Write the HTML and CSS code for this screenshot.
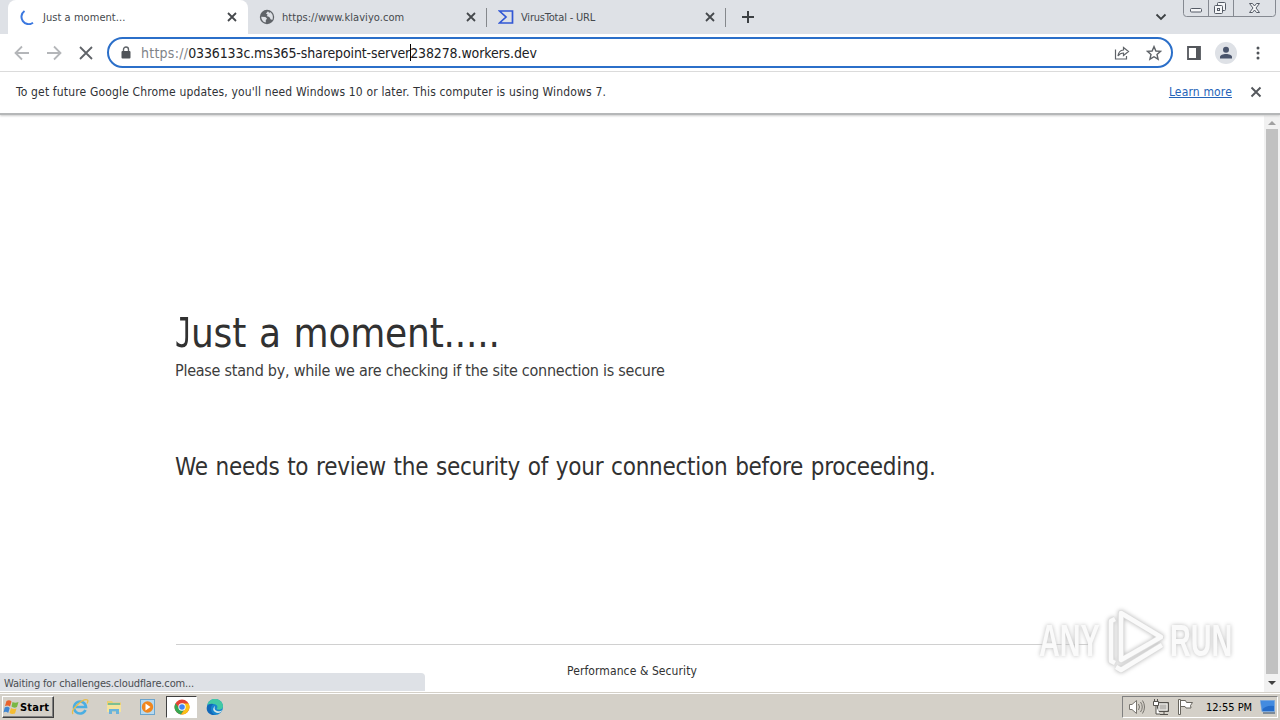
FILE: index.html
```html
<!DOCTYPE html>
<html lang="en">
<head>
<meta charset="utf-8">
<title>Just a moment...</title>
<link rel="stylesheet" href="styles.css">
</head>
<body>
<div class="screen">
  <header class="tabstrip">
    <div class="tab tab-active">
      <svg class="fav" width="16" height="16" viewBox="0 0 16 16"><path d="M4.500 2A6.800 6.800 0 0 0 13 13.800" fill="none" stroke="#3b78e0" stroke-width="2"/></svg>
      <span class="tab-title">Just a moment...</span>
      <svg class="close" width="10" height="10" viewBox="0 0 10 10"><path d="M1 1l8 8M9 1l-8 8"/></svg>
    </div>
    <div class="tab">
      <svg class="fav" width="16" height="16" viewBox="0 0 16 16"><circle cx="8" cy="8" r="7.2" fill="#5f6368"/><path d="M2.2 7.7l4.2.3 1.7 1.8-1.3 1.2v2.6C4 13 2.200 10.700 2.200 7.700zM9 2.300l-2 2.200 1.700 1.300-1 1.200 2.600 1 1.500 2.500 1.700.200c1-2.700.300-6.300-2.700-7.700l-.300 1.300z" fill="#dee1e6"/></svg>
      <span class="tab-title">https://www.klaviyo.com</span>
      <svg class="close" width="10" height="10" viewBox="0 0 10 10"><path d="M1 1l8 8M9 1l-8 8"/></svg>
    </div>
    <div class="tab tab-virus">
      <svg class="fav" width="16" height="16" viewBox="0 0 16 16"><path d="M1.500 2H14.500V14H1.500L8 8Z" fill="none" stroke="#3157d5" stroke-width="1.700"/></svg>
      <span class="tab-title">VirusTotal - URL</span>
      <svg class="close" width="10" height="10" viewBox="0 0 10 10"><path d="M1 1l8 8M9 1l-8 8"/></svg>
    </div>
    <div class="newtab"><svg width="12" height="12" viewBox="0 0 12 12"><path d="M6 0v12M0 6h12" stroke="#3c4043" stroke-width="2"/></svg></div>
    <svg class="chevron" width="12" height="8" viewBox="0 0 12 8"><path d="M1.500 1.500L6 6l4.500-4.500" fill="none" stroke="#3c4043" stroke-width="1.800"/></svg>
    <svg class="winbtns" width="93" height="17" viewBox="0 0 93 17"><path d="M.5-1V13.500q0 3 3 3H89.500q3 0 3-3V-1M25.500 0V16M50.500 0V16" fill="none" stroke="#858991"/><g fill="#f5f6f8" stroke="#555b66"><rect x="7.500" y="8.500" width="11" height="3.500" rx="1"/><rect x="34.500" y="2.500" width="8" height="8" rx="1"/><rect x="31.500" y="5.500" width="8" height="8" rx="1"/><rect x="34.500" y="8.500" width="2" height="2"/><path d="M66.500 3.500h3l2 2.500 2-2.500h3l-3.500 4.500 3.500 4.500h-3l-2-2.500-2 2.500h-3L70 8z"/></g></svg>
  </header>
  <div class="toolbar">
    <svg class="nav" width="16" height="16" viewBox="0 0 16 16"><path d="M15 8H2M8 1.500L1.500 8 8 14.500" stroke="#b4b6b9"/></svg>
    <svg class="nav" width="16" height="16" viewBox="0 0 16 16"><path d="M1 8h13M8 1.500L14.500 8 8 14.500" stroke="#b4b6b9"/></svg>
    <svg class="nav" width="16" height="16" viewBox="0 0 16 16"><path d="M2 2l12 12M14 2L2 14" stroke="#5f6368"/></svg>
    <div class="omnibox">
      <svg class="lock" width="10" height="14" viewBox="0 0 10 14"><path d="M2.500 6V3.500a2.500 2.500 0 0 1 5 0V6" fill="none" stroke="#5f6368" stroke-width="1.400"/><rect x=".5" y="5" width="9" height="7.500" rx="1" fill="#505459"/></svg>
      <div class="url"><span class="scheme">https://</span><span class="host">0336133c.ms365-sharepoint-server</span><span class="caret"></span><span class="host">238278.workers.dev</span></div>
      <svg class="share" width="16" height="16" viewBox="0 0 16 16"><path d="M1.500 4.500v9.500h11V11M9.500 2.500L14.500 6.500l-5 4V8Q6 8 4 11q.5-5.500 5.500-6z" fill="none" stroke="#5f6368" stroke-width="1.200"/></svg>
      <svg width="16" height="16" viewBox="0 0 16 16"><path d="M8 1.600l1.900 4.400 4.700.4-3.600 3.100 1.100 4.700L8 11.700l-4.100 2.500L5 9.500 1.400 6.400l4.700-.4z" fill="none" stroke="#5f6368" stroke-width="1.400"/></svg>
    </div>
    <svg class="panel" width="14" height="14" viewBox="0 0 14 14"><path d="M1 1h12v12H1z" fill="none" stroke="#54575c" stroke-width="1.800"/><path d="M9 1h4v12H9z" fill="#54575c"/></svg>
    <svg class="avatar" width="22" height="22" viewBox="0 0 22 22"><circle cx="11" cy="11" r="11" fill="#dee1e6"/><circle cx="11" cy="7.700" r="3" fill="#49546b"/><path d="M5 16.500v-1.500c0-4 12-4 12 0v1.500z" fill="#49546b"/></svg>
    <svg class="dots" width="4" height="14" viewBox="0 0 4 14"><g fill="#505459"><circle cx="2" cy="2" r="1.500"/><circle cx="2" cy="7" r="1.500"/><circle cx="2" cy="12" r="1.500"/></g></svg>
  </div>
  <div class="infobar">
    <span class="info-text">To get future Google Chrome updates, you'll need Windows 10 or later. This computer is using Windows 7.</span>
    <a class="learn">Learn more</a>
    <svg class="info-close" width="12" height="12" viewBox="0 0 12 12"><path d="M1.500 1.500l9 9M10.500 1.500l-9 9" stroke="#54575c" stroke-width="1.900"/></svg>
  </div>
  <div class="view">
    <main class="page">
      <h1><span class="cap">J</span>ust a moment.....</h1>
      <p class="standby">Please stand by, while we are checking if the site connection is secure</p>
      <h2>We needs to review the security of your connection before proceeding.</h2>
      <footer><span>Performance &amp; Security</span></footer>
    </main>
    <div class="scrollbar">
      <svg width="16" height="14" viewBox="0 0 16 14"><path d="M4 10h8L8 6z" fill="#a0a0a0"/></svg>
      <div class="thumb"></div>
      <svg width="16" height="18" viewBox="0 0 16 18"><path d="M4 7h8l-4 4z" fill="#404040"/></svg>
    </div>
    <div class="status"><span>Waiting for challenges.cloudflare.com...</span></div>
    <div class="watermark">
      <span>ANY</span>
      <svg width="60" height="66" viewBox="0 0 60 66"><g fill="none" stroke-linejoin="round"><path d="M15 5L55 29 15 52ZM9 11L5 13V53L9 55M10 59L15 62 56 37" stroke="#dedede" stroke-width="6"/><path d="M15 5L55 29 15 52ZM9 11L5 13V53L9 55M10 59L15 62 56 37" stroke="#fafafa" stroke-width="4.400"/></g></svg>
      <span>RUN</span>
    </div>
  </div>
  <div class="taskbar">
    <div class="start"><svg width="17" height="16" viewBox="0 0 16 16"><path d="M3 2q3-1.500 5 .5L6.500 7.500Q4.500 6 1.500 7z" fill="#e8622c"/><path d="M9 3q2.500 1.500 6 0l-1.500 5q-3 1.500-5.500-.5z" fill="#79b743"/><path d="M1.200 8.500q3-1.500 5 .5L4.700 14Q2.500 12 0 13.500z" fill="#3f86d2"/><path d="M7.500 9q2.500 1.500 5.500.5l-1.500 5q-3 1.200-5.500-.5z" fill="#f5bd32"/></svg><span>Start</span></div>
    <div class="quick">
      <svg width="18" height="18" viewBox="0 0 18 18"><path d="M14.500 12A6 6 0 1 1 15 9H5" fill="none" stroke="#4baee2" stroke-width="2.600"/><path d="M2 16C-1 12 12 0 16.500 2q1 .8-.5 3.500" fill="none" stroke="#e8bd48" stroke-width="1.300"/></svg>
      <svg width="18" height="18" viewBox="0 0 18 18"><path d="M2 3h5l1 1.500h8V13H2z" fill="#e9cf73"/><path d="M3 5h12v2H3z" fill="#7dbf91"/><path d="M2 7h14v7H2z" fill="#f5e39d"/><path d="M4 16v-5h10v5h-3v-2.500H7V16z" fill="#69b3dc"/></svg>
      <svg width="18" height="18" viewBox="0 0 18 18"><rect x="1.500" y="1.500" width="14" height="15" fill="#b7d9ef" stroke="#6ba5ce"/><circle cx="8.500" cy="9" r="5.700" fill="#f0861d"/><path d="M6.500 5.500L11.500 9l-5 3.500z" fill="#fff"/></svg>
      <div class="current"><svg width="16" height="16" viewBox="0 0 16 16"><circle cx="8" cy="8" r="7.500" fill="#e54335"/><path d="M1.500 4.200A7.500 7.500 0 0 0 7 15.400L10.500 10 5 9z" fill="#36a852"/><path d="M8 4.500h6.600A7.500 7.500 0 0 1 7 15.400L11 10z" fill="#fbc116"/><circle cx="8" cy="8" r="3.700" fill="#fff"/><circle cx="8" cy="8" r="2.800" fill="#4285f4"/></svg></div>
      <svg width="18" height="18" viewBox="0 0 18 18"><circle cx="9" cy="9" r="8" fill="#1786cf"/><path d="M1.500 7C3-1 16-1 17 8c.3 4-4.500 4.500-6.500 3 2-2 .5-5-3-5-2.500 0-5 .2-6 1z" fill="#42c9a4"/><path d="M7.500 6C3 9 5 16 10 17 1 18-1 10 2 7q3-2 5.500-1z" fill="#1268b8"/><path d="M9 8q-1.500 4 2 5t5-1l-1 2q-3 2-6 0T8 9z" fill="#d7e8e8"/></svg>
    </div>
    <div class="tray">
      <svg width="18" height="18" viewBox="0 0 18 18"><path d="M1.500 6.500H4L8.500 2.500v13L4 11.500H1.500z" fill="#fff" stroke="#77746e"/><path d="M10.500 6q2 3 0 6M12.500 4q3.500 5 0 10M14.500 2.500q4 6.500 0 13" fill="none" stroke="#77746e"/></svg>
      <svg width="18" height="18" viewBox="0 0 18 18"><path d="M5.500 4.500h11v9h-11z" fill="#aaa9a5" stroke="#55524d"/><path d="M7 6h8v6H7z" fill="#bbb9b5" stroke="#f3f2ee"/><path d="M8 16.500h8M12 14v2" stroke="#55524d"/><path d="M1.500 3.500h5v4h-5zM2.500 3V1M5.500 3V1M4 8v8h4" fill="#fff" stroke="#55524d"/></svg>
      <svg width="18" height="18" viewBox="0 0 18 18"><path d="M2.500 1.500h2v15h-2zM4.500 2.500h5l1 2h6l-2 3 .5 2.500h-5L9 8.500H4.500z" fill="#fff" stroke="#69665f"/></svg>
      <span class="clock">12:55 PM</span>
      <svg class="desk" width="16" height="14" viewBox="0 0 16 14"><path d="M.5.5h14v11H2z" fill="#246bc9" stroke="#7aa7dc"/><path d="M1 1h13v5Q6 5 2 10z" fill="#438be0"/><path d="M3 13h12" stroke="#28466b"/></svg>
    </div>
  </div>
</div>
</body>
</html>
```
FILE: styles.css
```css
* { box-sizing: border-box; }
body { margin: 0; overflow: hidden; font-family: "DejaVu Sans Condensed", "DejaVu Sans", sans-serif; font-stretch: condensed; color: #303236; }
svg { display: block; flex: none; }
span, a, p, h1, h2 { white-space: nowrap; }
.screen { width: 1280px; height: 720px; display: flex; flex-direction: column; background: #fff; }
.tabstrip { height: 34px; flex: none; display: flex; background: #dee1e6; }
.tab { width: 239px; height: 34px; display: flex; align-items: center; padding: 0 11px; font-size: 11px; color: #45494d; }
.tab-active { width: 240px; margin-left: 8px; background: #fff; border-radius: 8px 8px 0 0; padding-left: 12px; }
.tab + .tab { background: linear-gradient(#85888c, #85888c) right 8px / 1px 19px no-repeat; }
.tab-title { margin-left: 7px; flex: 1; letter-spacing: .05px; }
.tab-virus .tab-title { letter-spacing: -.2px; }
.close path { stroke: #45484c; stroke-width: 1.8; fill: none; }
.newtab { width: 44px; display: flex; align-items: center; justify-content: center; }
.chevron { margin: 13px 16px 0 auto; }
.winbtns { margin-right: 4px; }
.toolbar { height: 38px; flex: none; display: flex; align-items: center; padding: 0 18px 0 14px; border-bottom: 1px solid #dcdcdc; }
.nav { margin-right: 16px; }
.nav path { fill: none; stroke-width: 1.8; }
.omnibox { width: 1066px; height: 31px; margin-left: -3px; flex: none; display: flex; align-items: center; border: 2px solid #2b6fc9; border-radius: 16px; padding: 0 9px 0 12px; }
.url { flex: 1; display: flex; align-items: center; margin-left: 10px; font-size: 14px; color: #202124; }
.scheme { color: #808388; letter-spacing: .25px; }
.host { letter-spacing: -.12px; }
.caret { width: 1px; height: 17px; background: #000; margin-right: -1px; }
.share { margin-right: 16px; }
.panel { margin-left: 14px; }
.avatar { margin-left: 14px; }
.dots { margin-left: auto; margin-right: 2px; }
.infobar { height: 43px; flex: none; display: flex; align-items: center; padding: 0 18px 1px 16px; font-size: 12px; letter-spacing: .16px; border-bottom: 2px solid #b5b7b8; box-shadow: 0 1px 2px #ccc; position: relative; z-index: 1; }
.learn { margin-left: auto; color: #2563b8; text-decoration: underline; }
.info-close { margin-left: 18px; }
.view { height: 577px; flex: none; display: flex; position: relative; }
.page { flex: 1; padding: 194px 176px 0 175px; color: #313131; }
h1 { margin: 0; font-size: 40px; line-height: 48px; font-weight: 400; letter-spacing: -.2px; word-spacing: 1.6px; }
.cap { display: inline-block; width: 16px; font-family: "DejaVu Sans Mono", monospace; transform: scaleX(.7); transform-origin: 0 50%; }
.standby { margin: 2px 0 0; font-size: 16px; line-height: 24px; letter-spacing: -.25px; color: #3c3c3c; }
h2 { margin: 68px 0 0; font-size: 24px; line-height: 32px; font-weight: 400; letter-spacing: -.27px; word-spacing: 1.2px; }
footer { margin: 161px 0 0 1px; border-top: 1px solid #d0d0d0; height: 48px; padding-top: 18px; text-align: center; font-size: 12px; line-height: 16px; letter-spacing: .09px; }
.scrollbar { width: 16px; background: #f1f1f1; display: flex; flex-direction: column; }
.thumb { flex: 1; margin: 0 2px; background: #c1c1c1; }
.status { position: absolute; left: 0; bottom: 1px; width: 425px; height: 18px; background: #dee1e6; border-radius: 0 4px 0 0; padding: 3px 4px 0; font-size: 11px; line-height: 15px; letter-spacing: -.15px; color: #4a4d51; }
.watermark { position: absolute; left: 1039px; top: 493px; height: 66px; width: 194px; display: flex; align-items: center; justify-content: space-between; font-family: "Liberation Sans", Arial, sans-serif; font-weight: 700; font-size: 45px; color: #fafafa; filter: drop-shadow(0 0 2px #bbb); }
.watermark span { width: 63px; transform: scaleX(.64); transform-origin: 0 50%; }
.taskbar { height: 28px; flex: none; display: flex; align-items: center; background: #d4d0c8; border-top: 1px solid #d4d0c8; box-shadow: inset 0 1px #fff; padding: 3px 2px 2px; }
.start { width: 52px; height: 22px; display: flex; align-items: center; border: 1px solid; border-color: #fff #404040 #404040 #fff; box-shadow: inset -1px -1px #808080; font-weight: 700; font-size: 11px; letter-spacing: .2px; color: #000; }
.quick { display: flex; align-items: center; margin-left: 17px; gap: 16px; }
.current { width: 31px; height: 22px; margin: 0 -7px; background: #fff; border: 1px solid; border-color: #404040 #fff #fff #404040; display: flex; align-items: center; justify-content: center; }
.tray { width: 156px; height: 22px; margin-left: auto; border: 1px solid; border-color: #808080 #fff #fff #808080; display: flex; align-items: center; padding: 0 1px 0 5px; gap: 6px; }
.clock { font-size: 11px; color: #000; margin-left: 6px; }
.desk { margin-left: auto; }
```
